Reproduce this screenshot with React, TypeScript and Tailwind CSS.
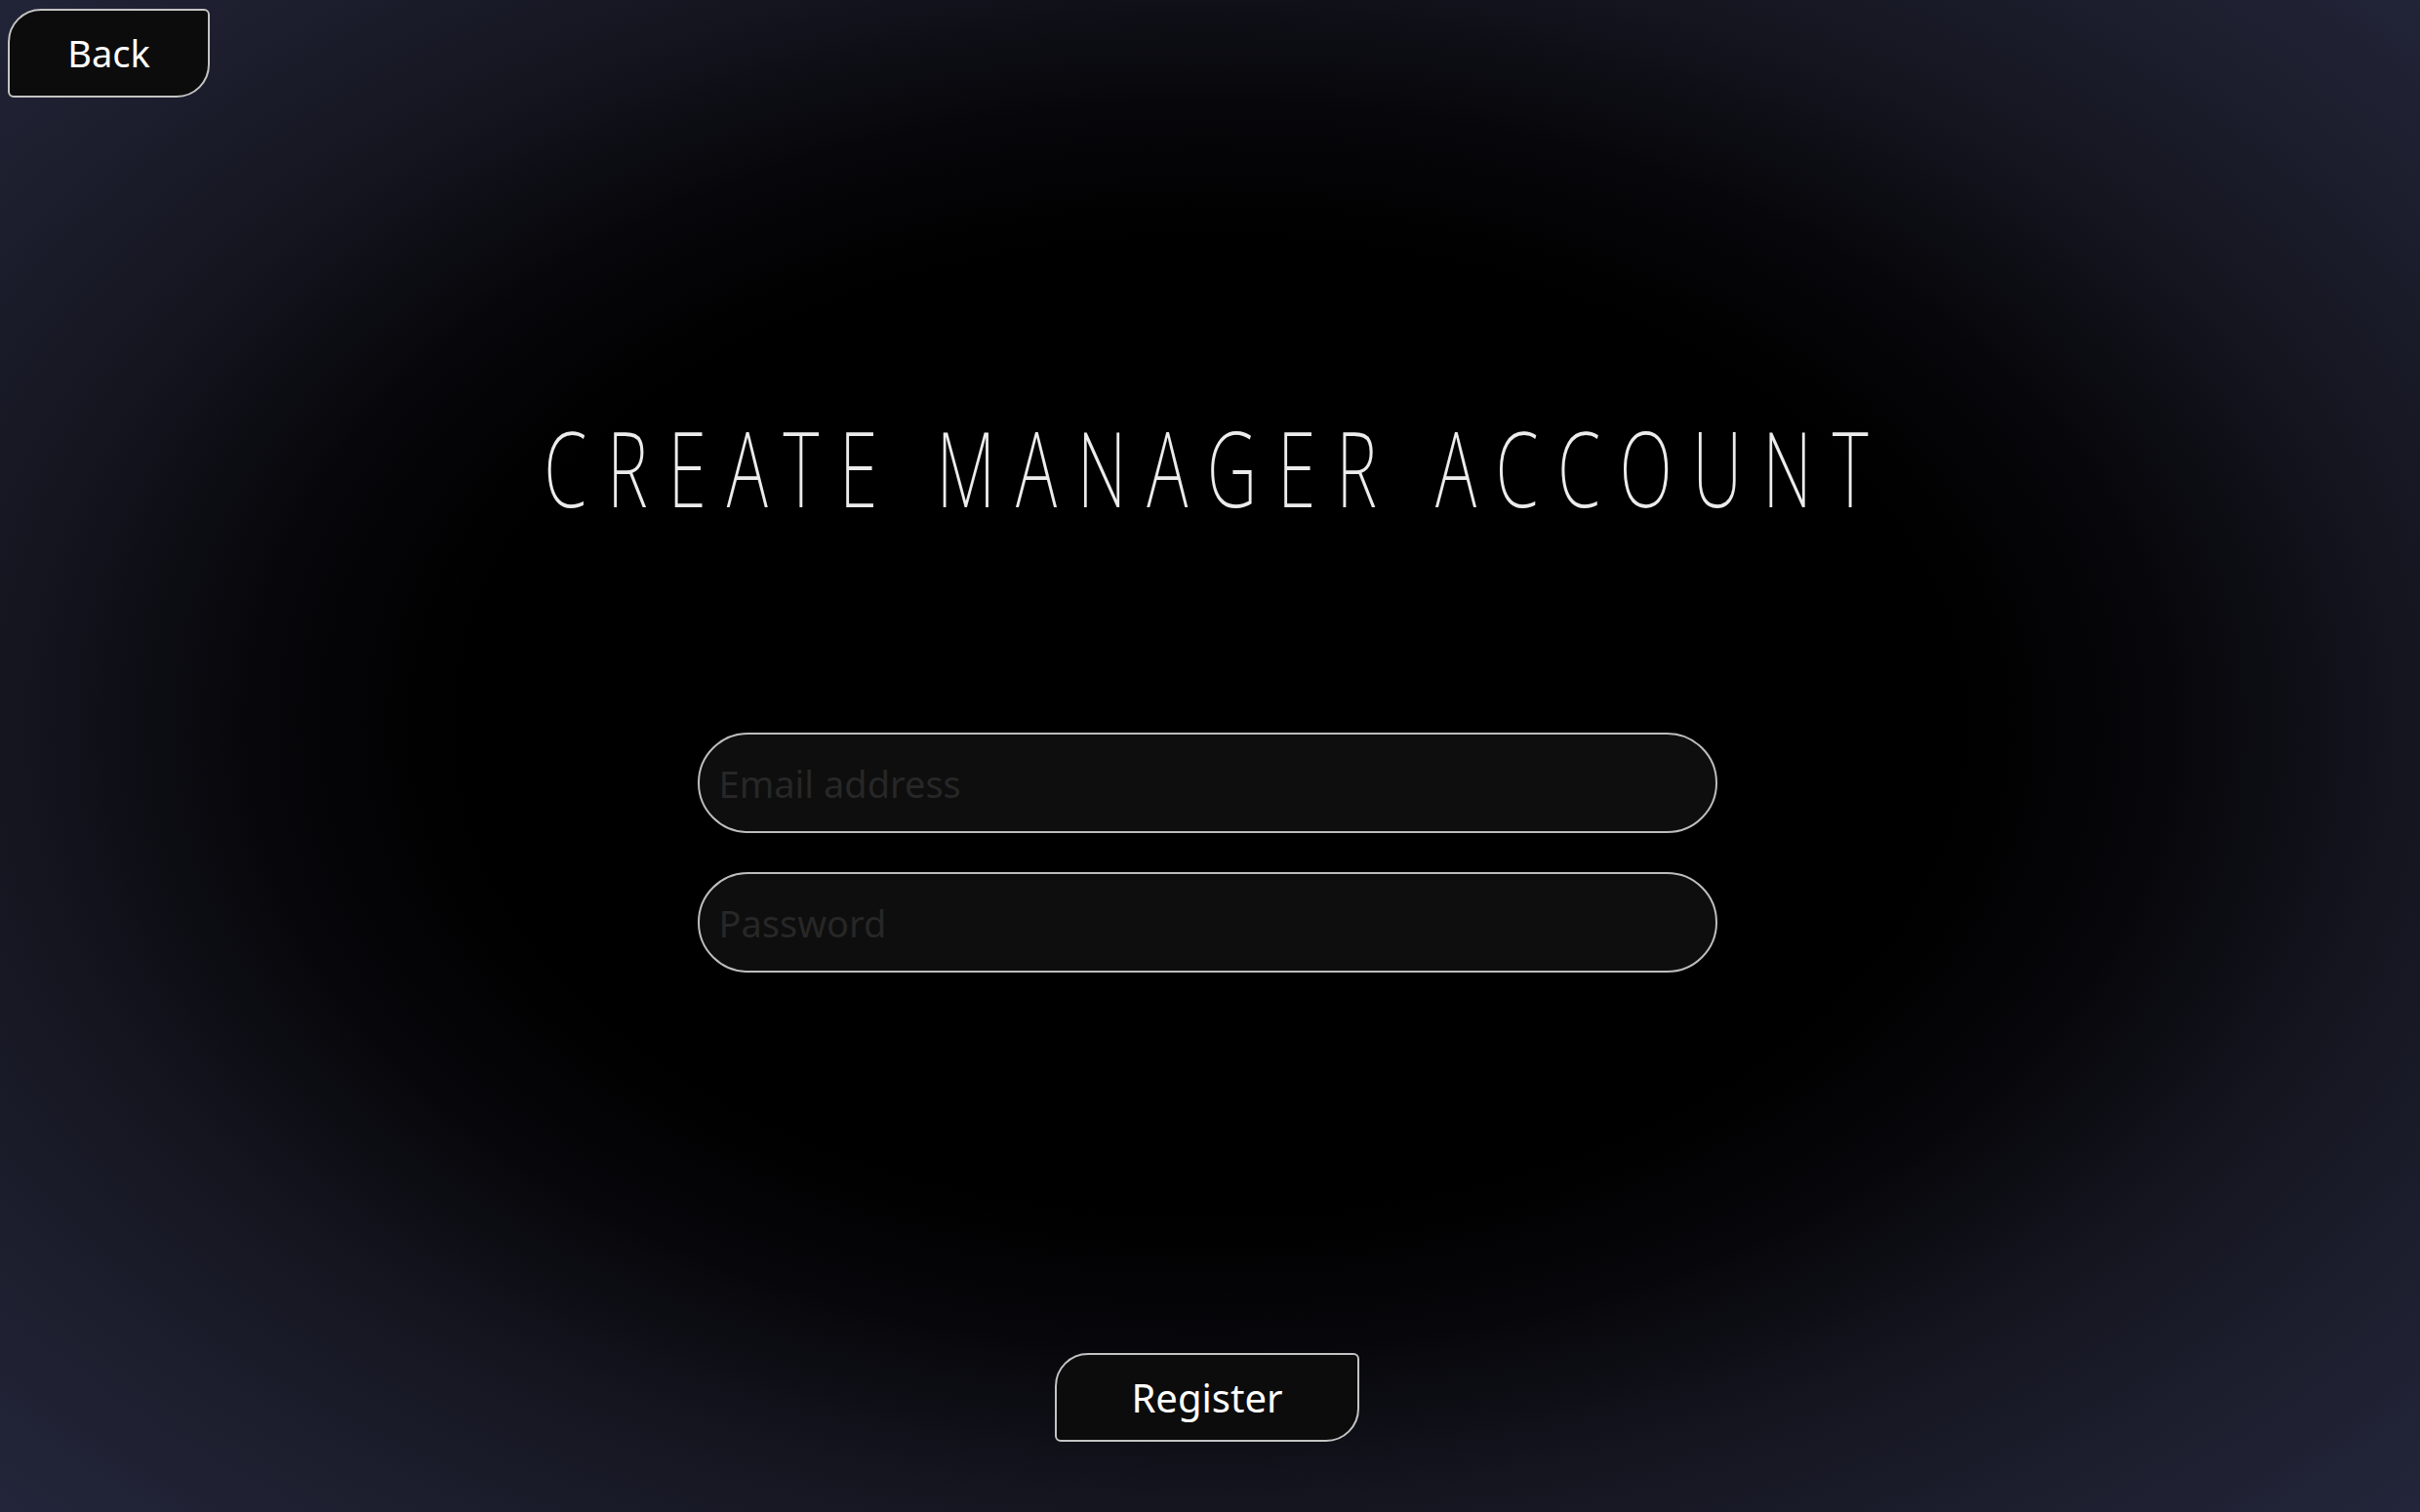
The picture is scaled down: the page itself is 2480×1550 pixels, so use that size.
const App = () => {
  return (
    <div className="relative flex h-[1550px] w-full flex-col items-center overflow-hidden bg-[radial-gradient(ellipse_at_50%_48%,#000000_0%,#000000_44%,#07070b_56%,#14151f_70%,#1d1f2f_85%,#23253a_100%)] font-['Segoe_UI','Noto_Sans',sans-serif]">
      {/* Top bar */}
      <div className="flex w-full pl-2 pt-[9px]">
        <button className="flex h-[91px] w-[207px] items-center justify-center rounded-tl-[34px] rounded-tr-[6px] rounded-br-[34px] rounded-bl-[6px] border-2 border-[#c4c4c4] bg-[#0c0c0c] text-[38px] text-white">
          Back
        </button>
      </div>

      {/* Title */}
      <h1 className="mt-[325px] mr-[8px] origin-center scale-x-[0.66] pl-[0.292em] font-['Noto_Sans',sans-serif] text-[108px] leading-[1] font-extralight tracking-[0.292em] whitespace-nowrap text-[#ececec]">
        CREATE MANAGER ACCOUNT
      </h1>

      {/* Form */}
      <div className="mt-[218px] mr-[6px] flex w-[1045px] flex-col gap-[40px]">
        <input
          type="email"
          placeholder="Email address"
          className="h-[103px] w-full rounded-full border-2 border-[#bdbdbd] bg-[#0e0e0e] px-5 text-[38px] text-white outline-none placeholder:text-[#272727]"
        />
        <input
          type="password"
          placeholder="Password"
          className="h-[103px] w-full rounded-full border-2 border-[#bdbdbd] bg-[#0e0e0e] px-5 text-[38px] text-white outline-none placeholder:text-[#272727]"
        />
      </div>

      {/* Register */}
      <button className="mt-auto mr-[6px] mb-[72px] flex h-[91px] w-[312px] items-center justify-center rounded-tl-[34px] rounded-tr-[6px] rounded-br-[34px] rounded-bl-[6px] border-2 border-[#c4c4c4] bg-[#0c0c0c] text-[40px] text-white">
        Register
      </button>
    </div>
  );
};

export default App;
